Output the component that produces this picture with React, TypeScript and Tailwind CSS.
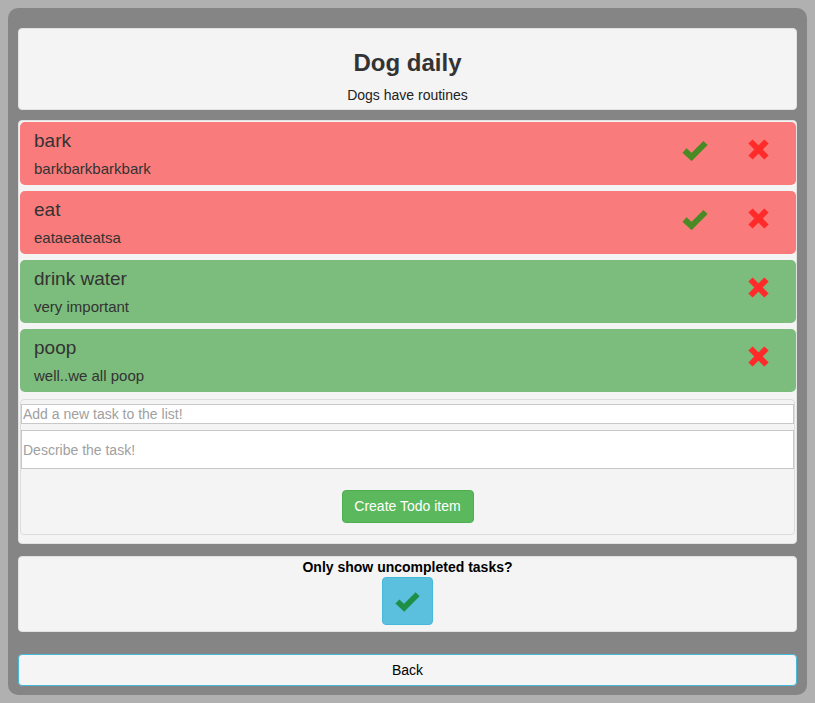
import React from "react";

type Task = {
  title: string;
  description: string;
  done: boolean;
};

const tasks: Task[] = [
  { title: "bark", description: "barkbarkbarkbark", done: false },
  { title: "eat", description: "eataeateatsa", done: false },
  { title: "drink water", description: "very important", done: true },
  { title: "poop", description: "well..we all poop", done: true },
];

const CheckIcon = ({ color, className }: { color: string; className?: string }) => (
  <svg viewBox="0 0 26 21" className={className} fill="none">
    <polyline
      points="2.5,10.5 9.5,17 23.5,3"
      stroke={color}
      strokeWidth="6"
      strokeLinecap="butt"
      strokeLinejoin="miter"
    />
  </svg>
);

const CrossIcon = () => (
  <svg viewBox="0 0 21 21" className="w-[21px] h-[21px]" fill="none">
    <line x1="2.5" y1="2.5" x2="18.5" y2="18.5" stroke="#ff2b2b" strokeWidth="6" />
    <line x1="18.5" y1="2.5" x2="2.5" y2="18.5" stroke="#ff2b2b" strokeWidth="6" />
  </svg>
);

const TaskCard = ({ task }: { task: Task }) => (
  <div
    className={
      task.done
        ? "flex h-[63px] rounded-[5px] bg-[#7cbc7c] text-[#333]"
        : "flex h-[63px] rounded-[5px] bg-[#f97b7b] text-[#333]"
    }
  >
    <div className="flex-1 pl-[14px] pt-[9px]">
      <div className="text-[19px] leading-[20px]">{task.title}</div>
      <div className="mt-2 text-[15px] leading-[20px]">{task.description}</div>
    </div>
    <div className="flex items-start gap-[23px] pr-[18px] pt-[17px]">
      <div className="flex w-[40px] justify-center">
        {!task.done && <CheckIcon color="#4a8a24" className="w-[26px] h-[21px] mt-[1px]" />}
      </div>
      <div className="flex w-[40px] justify-center">
        <CrossIcon />
      </div>
    </div>
  </div>
);

export default function App() {
  return (
    <div
      className="min-h-screen bg-[#b0b0b0] p-2"
      style={{ fontFamily: '"Liberation Sans", Arial, sans-serif' }}
    >
      <div className="flex h-[687px] flex-col rounded-[10px] bg-[#858585] px-[10px] pt-5">
        <div className="flex h-[82px] flex-col items-center rounded-[4px] border border-[#e2e2e2] bg-[#f4f4f4] pt-[18px] text-[#333]">
          <h1 className="text-[24px] font-bold leading-[32px]">Dog daily</h1>
          <p className="mt-[6px] text-[14px] leading-[20px] text-[#222]">Dogs have routines</p>
        </div>

        <div className="mt-[10px] flex h-[424px] flex-col gap-[6px] rounded-[4px] border border-[#e3e3e3] bg-[#f4f4f4] p-[1px] pr-0">
          {tasks.map((t) => (
            <TaskCard key={t.title} task={t} />
          ))}
          <div className="mt-[1px] mr-[1px] flex h-[136px] flex-col rounded-[4px] border border-[#dcdcdc] bg-[#f4f4f4] pt-[4px]">
            <input
              className="h-[20px] border border-[#c8c8c8] bg-white px-[1px] text-[14px] text-[#333] placeholder:text-[#a0a0a0] outline-none"
              placeholder="Add a new task to the list!"
            />
            <input
              className="mt-[6px] h-[39px] border border-[#c8c8c8] bg-white px-[1px] text-[14px] text-[#333] placeholder:text-[#a0a0a0] outline-none"
              placeholder="Describe the task!"
            />
            <div className="mt-[21px] flex justify-center">
              <button className="h-[33px] w-[132px] rounded-[4px] border border-[#4cae4c] bg-[#5cb85c] text-[14px] text-white">
                Create Todo item
              </button>
            </div>
          </div>
        </div>

        <div className="mt-[12px] flex h-[76px] flex-col items-center rounded-[4px] border border-[#e2e2e2] bg-[#f4f4f4] pt-[1px]">
          <div className="text-[14px] font-bold leading-[18px] text-black">Only show uncompleted tasks?</div>
          <button className="mt-[1px] flex h-[48px] w-[51px] items-center justify-center rounded-[4px] border border-[#46b8da] bg-[#5bc0de]">
            <CheckIcon color="#1f8f48" className="w-[25px] h-[21px]" />
          </button>
        </div>

        <button className="mt-[22px] h-[32px] rounded-[4px] border border-[#46b8da] bg-[#f5f5f5] text-[14px] text-black">
          Back
        </button>
      </div>
    </div>
  );
}
